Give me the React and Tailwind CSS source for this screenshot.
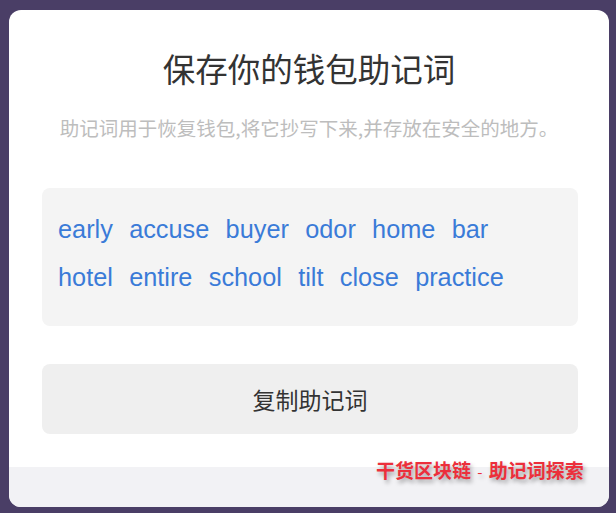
const rows = [
  ['early', 'accuse', 'buyer', 'odor', 'home', 'bar'],
  ['hotel', 'entire', 'school', 'tilt', 'close', 'practice'],
];

export default function App() {
  return (
    <div className="w-[616px] h-[513px] bg-[#4a3e66] pt-[10px] pl-[9px] overflow-hidden">
      <div
        className="relative w-[600px] h-[497px] bg-white rounded-[12px] overflow-hidden flex flex-col"
        style={{ fontFamily: '"Noto Sans CJK SC", "Noto Sans", sans-serif' }}
      >
        {/* Header */}
        <h1 className="mt-[36px] text-center text-[32.5px] leading-[44px] text-[#333333] font-normal">
          保存你的钱包助记词
        </h1>
        <p className="mt-[24px] text-center text-[19.5px] leading-[28px] text-[#bdbdbd]">
          助记词用于恢复钱包,将它抄写下来,并存放在安全的地方。
        </p>

        {/* Mnemonic */}
        <div
          className="mt-[46px] ml-[33px] w-[536px] h-[138px] bg-[#f4f4f4] rounded-[8px] px-[16px] pt-[17px] text-[25.3px] leading-[48px] text-[#3a7bd8]"
          style={{ fontFamily: '"Liberation Sans", Arial, sans-serif' }}
        >
          {rows.map((row, i) => (
            <div key={i} className="flex gap-x-[16.3px]">
              {row.map((w) => (
                <span key={w}>{w}</span>
              ))}
            </div>
          ))}
        </div>

        {/* Copy button */}
        <button
          type="button"
          className="mt-[38px] ml-[33px] w-[536px] h-[70px] bg-[#efefef] rounded-[8px] text-[23px] text-[#333333] flex items-center justify-center"
        >
          复制助记词
        </button>

        {/* Footer band */}
        <div className="mt-auto h-[40px] bg-[#f2f2f5]" />

        {/* Watermark */}
        <div
          className="absolute left-[367px] top-[448px] text-[19px] leading-[24px] font-bold text-[#ec2f3b] whitespace-nowrap"
          style={{ textShadow: '2px 3px 4px rgba(0,0,0,0.35)' }}
        >
          干货区块链 <span className="font-normal text-[15px] px-[2px]">-</span> 助记词探索
        </div>
      </div>
    </div>
  );
}
